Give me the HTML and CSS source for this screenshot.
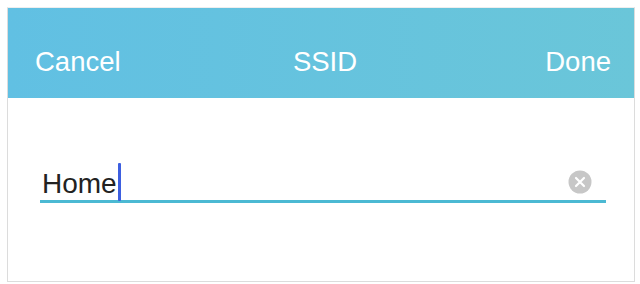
FILE: index.html
```html
<!DOCTYPE html>
<html>
<head>
<meta charset="utf-8">
<link rel="stylesheet" href="styles.css">
</head>
<body>
<div class="frame">
  <div class="header">
    <span class="btn left">Cancel</span>
    <span class="title">SSID</span>
    <span class="btn right">Done</span>
  </div>
  <div class="content">
    <div class="field">
      <span class="value">Home</span><span class="cursor"></span>
      <span class="spacer"></span>
      <svg class="clear" width="24" height="24" viewBox="0 0 24 24">
        <circle cx="12" cy="12" r="11.5" fill="#c7c7c7"/>
        <path d="M8 8 L16 16 M16 8 L8 16" stroke="#fff" stroke-width="2.2" stroke-linecap="round"/>
      </svg>
    </div>
  </div>
</div>
</body>
</html>
```
FILE: styles.css
```css
html, body { margin: 0; padding: 0; background: #fff; }
body { font-family: "Liberation Sans", Arial, sans-serif; }
.frame {
  margin: 7px 0 0 7px;
  width: 626px;
  height: 273px;
  border: 1px solid #dcdcdc;
  border-top-color: #eee;
  box-sizing: content-box;
  display: flex;
  flex-direction: column;
}
.header {
  height: 90px;
  background: linear-gradient(90deg, #61c0e3 0%, #6ac6d9 100%);
  display: grid;
  grid-template-columns: 1fr auto 1fr;
  align-items: center;
  padding: 18px 23px 0 27px;
  box-sizing: border-box;
  color: #fff;
  font-size: 27.5px;
}
.left { justify-self: start; }
.right { justify-self: end; }
.title { margin-left: 4px; }
.content {
  flex: 1;
  padding: 64px 28px 0 32px;
}
.field {
  display: flex;
  align-items: center;
  height: 41px;
  border-bottom: 3px solid #4bb9d3;
  padding-left: 2px;
  box-sizing: border-box;
}
.value {
  font-size: 28px;
  color: #222;
  line-height: 40px;
  padding-top: 6px;
}
.cursor {
  width: 3px;
  height: 38px;
  background: #3d5fe0;
  border-radius: 1px;
  margin-left: 1px;
  margin-top: 2px;
}
.spacer { flex: 1; }
.clear { margin-right: 14px; margin-top: 2px; }
```
